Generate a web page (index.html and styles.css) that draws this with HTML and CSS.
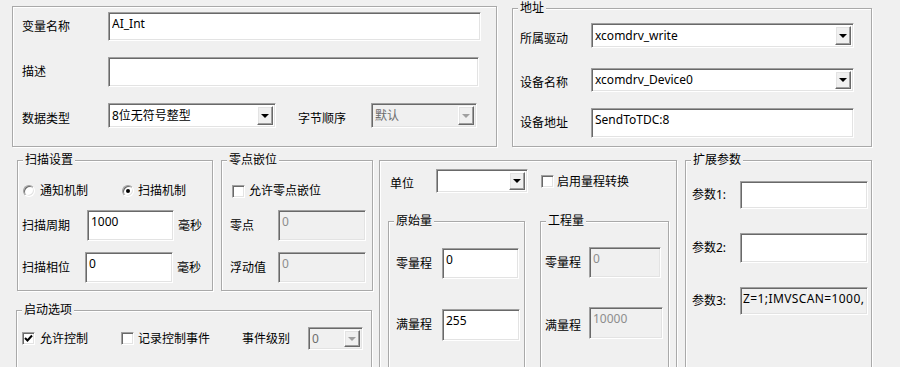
FILE: index.html
```
<!DOCTYPE html>
<html lang="zh-CN">
<head>
<meta charset="UTF-8">
<title>变量属性</title>
<link rel="stylesheet" href="styles.css">
</head>
<body>

  <div class="dialog">
    <div class="top-row">
      <!-- 基本信息 -->
      <div class="group basic">
        <div class="row r-name">
          <span class="lbl w86">变量名称</span>
          <input class="edit h29 w373" type="text" value="AI_Int">
        </div>
        <div class="row r-desc">
          <span class="lbl w86">描述</span>
          <input class="edit h30 w371" type="text" value="">
        </div>
        <div class="row r-type">
          <span class="lbl w86 low">数据类型</span>
          <div class="combo w168 h25"><span class="val">8位无符号整型</span><span class="drop"></span></div>
          <span class="lbl low order-lbl">字节顺序</span>
          <div class="combo off w106 h25 order"><span class="val">默认</span><span class="drop"></span></div>
        </div>
      </div>

      <!-- 地址 -->
      <div class="group addr">
        <span class="caption">地址</span>
        <div class="row r-drv">
          <span class="lbl w71 low">所属驱动</span>
          <div class="combo w263 h25"><span class="val">xcomdrv_write</span><span class="drop"></span></div>
        </div>
        <div class="row r-dev">
          <span class="lbl w71 low">设备名称</span>
          <div class="combo w263 h24"><span class="val">xcomdrv_Device0</span><span class="drop"></span></div>
        </div>
        <div class="row r-devaddr">
          <span class="lbl w71">设备地址</span>
          <input class="edit h30 w263" type="text" value="SendToTDC:8">
        </div>
      </div>
    </div>

    <div class="bottom-row">
      <div class="left-col">
        <div class="scan-row">
          <!-- 扫描设置 -->
          <div class="group scan">
            <span class="caption">扫描设置</span>
            <div class="row opt-row">
              <span class="radio first"></span><span class="opt-lbl">通知机制</span>
              <span class="radio on second"></span><span class="opt-lbl">扫描机制</span>
            </div>
            <div class="row field-row">
              <span class="lbl w65">扫描周期</span>
              <input class="edit h31 w87" type="text" value="1000">
              <span class="unit-lbl">毫秒</span>
            </div>
            <div class="row field-row">
              <span class="lbl w63">扫描相位</span>
              <input class="edit h31 w88" type="text" value="0">
              <span class="unit-lbl">毫秒</span>
            </div>
          </div>

          <!-- 零点嵌位 -->
          <div class="group zero">
            <span class="caption">零点嵌位</span>
            <div class="row opt-row">
              <span class="check first"></span><span class="opt-lbl">允许零点嵌位</span>
            </div>
            <div class="row field-row">
              <span class="lbl w48">零点</span>
              <input class="edit off h31 w88" type="text" value="0" disabled>
            </div>
            <div class="row field-row">
              <span class="lbl w48">浮动值</span>
              <input class="edit off h31 w88" type="text" value="0" disabled>
            </div>
          </div>
        </div>

        <!-- 启动选项 -->
        <div class="group start">
          <span class="caption">启动选项</span>
          <div class="row start-row">
            <span class="check on"><svg width="9" height="9" viewBox="0 0 9 9"><path d="M1 4 L3.5 6.5 L8 1.5" fill="none" stroke="#000" stroke-width="2"/></svg></span>
            <span class="opt-lbl">允许控制</span>
            <span class="check second"></span>
            <span class="opt-lbl">记录控制事件</span>
            <span class="lbl level-lbl">事件级别</span>
            <div class="combo off w55 h23 level"><span class="val">0</span><span class="drop"></span></div>
          </div>
        </div>
      </div>

      <!-- 单位 / 量程 -->
      <div class="group unit">
        <div class="row unit-row">
          <span class="lbl w46 unit-name low">单位</span>
          <div class="combo w92 h24"><span class="val"></span><span class="drop"></span></div>
          <span class="check range-check"></span>
          <span class="opt-lbl low">启用量程转换</span>
        </div>
        <div class="range-row">
          <div class="group raw">
            <span class="caption">原始量</span>
            <div class="row zero-r">
              <span class="lbl w46">零量程</span>
              <input class="edit h31 w77" type="text" value="0">
            </div>
            <div class="row full-r">
              <span class="lbl w46">满量程</span>
              <input class="edit h32 w78" type="text" value="255">
            </div>
          </div>
          <div class="group eng">
            <span class="caption">工程量</span>
            <div class="row zero-e">
              <span class="lbl w44">零量程</span>
              <input class="edit off h31 w72" type="text" value="0" disabled>
            </div>
            <div class="row full-e">
              <span class="lbl w44 low">满量程</span>
              <input class="edit off h32 w74" type="text" value="10000" disabled>
            </div>
          </div>
        </div>
      </div>

      <!-- 扩展参数 -->
      <div class="group ext">
        <span class="caption">扩展参数</span>
        <div class="row p1">
          <span class="lbl w48">参数1:</span>
          <input class="edit h28 w128" type="text" value="">
        </div>
        <div class="row p2">
          <span class="lbl w48">参数2:</span>
          <input class="edit h30 w128" type="text" value="">
        </div>
        <div class="row p3">
          <span class="lbl w48">参数3:</span>
          <input class="edit ro h28 w128" type="text" value="Z=1;IMVSCAN=1000," readonly>
        </div>
      </div>
    </div>
  </div>

</body>
</html>
```

FILE: styles.css
```
body {
  margin: 0;
  width: 900px;
  height: 367px;
  overflow: hidden;
  background-color: #f0f0f0;
  font-family: "Noto Sans", "Noto Sans CJK SC", sans-serif;
  font-size: 12px;
  line-height: 16px;
  color: #000;
}

/* 分组框 */
.group {
  position: relative;
  box-sizing: border-box;
  flex: none;
  border: 1px solid #a9a9a9;
  box-shadow: inset 1px 1px 0 #fff, 1px 1px 0 #fff;
}

.caption {
  position: absolute;
  top: -8px;
  left: 5px;
  padding: 0 2px;
  line-height: 14px;
  background-color: #f0f0f0;
  white-space: nowrap;
}

.row {
  display: flex;
  align-items: center;
}

.lbl {
  flex: none;
  white-space: nowrap;
}

.low {
  padding-top: 6px;
}

.w44 { width: 44px; }
.w46 { width: 46px; }
.w48 { width: 48px; }
.w63 { width: 63px; }
.w65 { width: 65px; }
.w71 { width: 71px; }
.w86 { width: 86px; }

/* 文本框 */
.edit {
  box-sizing: border-box;
  flex: none;
  margin: 0;
  padding: 2px 3px 0;
  font: inherit;
  line-height: 16px;
  color: #000;
  background-color: #fff;
  border: 1px solid;
  border-color: #a0a0a0 #fff #fff #a0a0a0;
  box-shadow: inset 1px 1px 0 #696969, inset -1px -1px 0 #e3e3e3;
  outline: none;
}

.edit.off {
  color: #8d8d8d;
  background-color: #f0f0f0;
}

.edit.ro {
  padding-left: 2px;
  padding-right: 0;
  background-color: #f0f0f0;
  letter-spacing: 0.4px;
}

.h28 { height: 28px; padding-bottom: 8px; }
.h29 { height: 29px; padding-bottom: 9px; }
.h30 { height: 30px; padding-bottom: 10px; }
.h31 { height: 31px; padding-bottom: 11px; }
.h32 { height: 32px; padding-bottom: 12px; }
.h23 { height: 23px; }
.h24 { height: 24px; }
.h25 { height: 25px; }

.w55 { width: 55px; }
.w72 { width: 72px; }
.w74 { width: 74px; }
.w77 { width: 77px; }
.w78 { width: 78px; }
.w87 { width: 87px; }
.w88 { width: 88px; }
.w92 { width: 92px; }
.w106 { width: 106px; }
.w128 { width: 128px; }
.w168 { width: 168px; }
.w263 { width: 263px; }
.w371 { width: 371px; }
.w373 { width: 373px; }

/* 下拉框 */
.combo {
  box-sizing: border-box;
  flex: none;
  display: flex;
  padding: 2px;
  background-color: #fff;
  border: 1px solid;
  border-color: #a0a0a0 #fff #fff #a0a0a0;
  box-shadow: inset 1px 1px 0 #696969, inset -1px -1px 0 #e3e3e3;
}

.combo .val {
  flex: 1;
  align-self: center;
  padding-left: 1px;
  white-space: nowrap;
  overflow: hidden;
}

.combo .drop {
  box-sizing: border-box;
  flex: none;
  width: 16px;
  display: flex;
  align-items: center;
  justify-content: center;
  background-color: #f0f0f0;
  border: 1px solid;
  border-color: #fff #696969 #696969 #fff;
  box-shadow: inset -1px -1px 0 #a0a0a0, inset 1px 1px 0 #e3e3e3;
}

.combo .drop::after {
  content: "";
  border-top: 4px solid #000;
  border-left: 4px solid transparent;
  border-right: 4px solid transparent;
}

.combo.off {
  background-color: #f0f0f0;
}

.combo.off .val {
  color: #6d6d6d;
}

.combo.off .drop::after {
  border-top-color: #a0a0a0;
}

/* 单选 / 复选 */
.radio {
  box-sizing: border-box;
  flex: none;
  width: 12px;
  height: 12px;
  display: flex;
  align-items: center;
  justify-content: center;
  border-radius: 50%;
  background-color: #fff;
  border: 1px solid;
  border-color: #a0a0a0 #fff #fff #a0a0a0;
  box-shadow: inset 1px 1px 0 #696969, inset -1px -1px 0 #e3e3e3;
}

.radio.on::after {
  content: "";
  width: 4px;
  height: 4px;
  border-radius: 50%;
  background-color: #000;
}

.check {
  box-sizing: border-box;
  flex: none;
  width: 13px;
  height: 13px;
  display: flex;
  align-items: center;
  justify-content: center;
  background-color: #fff;
  border: 1px solid;
  border-color: #a0a0a0 #fff #fff #a0a0a0;
  box-shadow: inset 1px 1px 0 #696969, inset -1px -1px 0 #e3e3e3;
}

.opt-lbl {
  flex: none;
  white-space: nowrap;
}

/* 上半部分 */
.top-row {
  display: flex;
  gap: 15px;
  padding: 6px 0 0 12px;
}

.basic {
  width: 485px;
  height: 141px;
  padding: 5px 0 0 9px;
}

.r-name { height: 29px; }
.r-desc { height: 30px; margin-top: 16px; }
.r-type { height: 25px; margin-top: 16px; }

.order-lbl { margin-left: 22px; }
.order { margin-left: 25px; }

.addr {
  margin-top: 2px;
  width: 360px;
  height: 139px;
  padding: 14px 0 0 7px;
}

.r-drv { height: 25px; }
.r-dev { height: 24px; margin-top: 20px; }
.r-devaddr { height: 30px; margin-top: 16px; }

/* 下半部分 */
.bottom-row {
  display: flex;
  align-items: flex-start;
  margin-top: 13px;
  padding-left: 16px;
}

.left-col {
  flex: none;
  width: 357px;
}

.scan-row {
  display: flex;
}

.opt-row {
  height: 16px;
  margin-top: 22px;
}

.field-row {
  height: 31px;
  margin-top: 11px;
}

.scan {
  margin-left: 1px;
  width: 196px;
  height: 131px;
  padding-left: 4px;
}

.scan .first { margin-left: 1px; }
.scan .first + .opt-lbl { margin-left: 5px; }
.scan .second { margin-left: 34px; }
.scan .second + .opt-lbl { margin-left: 4px; }

.unit-lbl {
  margin-left: 4px;
}

.zero {
  margin-left: 8px;
  width: 152px;
  height: 131px;
  padding-left: 8px;
}

.zero .first { margin-left: 2px; }
.zero .first + .opt-lbl { margin-left: 4px; }

.start {
  margin-top: 19px;
  width: 356px;
  height: 90px;
  padding-left: 5px;
}

.start-row {
  height: 23px;
  margin-top: 16px;
}

.start .check.on + .opt-lbl { margin-left: 5px; }
.start .second { margin-left: 33px; }
.start .second + .opt-lbl { margin-left: 4px; }
.level-lbl { margin-left: 32px; }
.level { margin-left: 18px; }

.unit {
  margin-left: 6px;
  width: 298px;
  height: 220px;
  padding-left: 8px;
}

.unit-row {
  height: 24px;
  margin-top: 8px;
}

.unit-name { margin-left: 2px; }
.range-check { margin-left: 13px; }
.range-check + .opt-lbl { margin-left: 3px; padding-top: 2px; }

.range-row {
  display: flex;
  margin-top: 28px;
}

.raw {
  width: 137px;
  height: 160px;
  padding-left: 7px;
}

.zero-r { height: 31px; margin-top: 26px; }
.full-r { height: 32px; margin-top: 30px; }

.eng {
  margin-left: 15px;
  width: 129px;
  height: 160px;
  padding-left: 4px;
}

.zero-e { height: 31px; margin-top: 25px; }
.full-e { height: 32px; margin-top: 29px; }

.ext {
  margin-left: 8px;
  width: 187px;
  height: 220px;
  padding-left: 6px;
}

.p1 { height: 28px; margin-top: 20px; }
.p2 { height: 30px; margin-top: 24px; }
.p3 { height: 28px; margin-top: 24px; }
```
